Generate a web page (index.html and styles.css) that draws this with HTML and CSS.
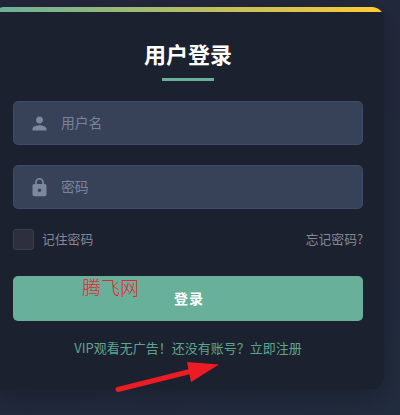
FILE: index.html
```html
<!DOCTYPE html>
<html lang="zh-CN">
<head>
  <meta charset="UTF-8">
  <meta name="viewport" content="width=device-width, initial-scale=1.0">
  <title>用户登录</title>
  <link rel="stylesheet" href="styles.css">
</head>
<body>

<main class="login-card">
  <h1 class="title">用户登录</h1>

  <form class="login-form">
    <label class="field">
      <svg class="icon" viewBox="0 0 24 24"><path d="M12 12c2.21 0 4-1.79 4-4s-1.79-4-4-4-4 1.79-4 4 1.79 4 4 4zm0 2c-2.67 0-8 1.34-8 4v2h16v-2c0-2.66-5.33-4-8-4z"/></svg>
      <input type="text" name="username" placeholder="用户名">
    </label>
    <label class="field">
      <svg class="icon" viewBox="0 0 24 24"><path d="M18 8h-1V6c0-2.76-2.24-5-5-5S7 3.24 7 6v2H6c-1.1 0-2 .9-2 2v10c0 1.1.9 2 2 2h12c1.1 0 2-.9 2-2V10c0-1.1-.9-2-2-2zm-6 9c-1.1 0-2-.9-2-2s.9-2 2-2 2 .9 2 2-.9 2-2 2zm3.1-9H8.9V6c0-1.71 1.39-3.1 3.1-3.1s3.1 1.39 3.1 3.1v2z"/></svg>
      <input type="password" name="password" placeholder="密码">
    </label>

    <div class="options">
      <label class="remember"><input type="checkbox" name="remember"><span>记住密码</span></label>
      <a href="#">忘记密码?</a>
    </div>

    <button type="submit" class="submit">登录</button>
  </form>

  <p class="register"><a href="#">VIP观看无广告！还没有账号？立即注册</a></p>

  <span class="watermark">腾飞网</span>
  <svg class="arrow" viewBox="0 0 110 40">
    <path class="shaft" d="M6 29.5L80 11"/>
    <path class="head" d="M75 2L107 4.5L79 22Z"/>
  </svg>
</main>

</body>
</html>
```
FILE: styles.css
```css
* {
  box-sizing: border-box;
}
body {
  margin: 0;
  height: 415px;
  padding-top: 7px;
  overflow: hidden;
  font-family: "Noto Sans CJK SC", sans-serif;
  background: linear-gradient(135deg, #24263b, #222d3f);
}
a {
  color: inherit;
  text-decoration: none;
}
.login-card {
  position: relative;
  width: 392px;
  height: 382px;
  margin-left: -8px;
  padding: 30px 21px 0;
  border-radius: 12px;
  background: #1c2130;
  box-shadow: 0 8px 28px rgba(0, 0, 0, 0.25);
}
/* gradient strip, clipped to the rounded corners of the card */
.login-card::before {
  content: "";
  position: absolute;
  inset: 0;
  border-radius: 12px;
  background: linear-gradient(90deg, #68b09a, #ffcc33) 0 0 / 100% 5px no-repeat;
}
.title {
  margin: 0;
  color: #fff;
  font-size: 22px;
  line-height: 33px;
  font-weight: 700;
  text-align: center;
}
.title::after {
  content: "";
  display: block;
  width: 52px;
  height: 3px;
  margin: 8px auto 0;
  background: #68b09a;
}
.login-form {
  position: relative;
  display: flex;
  flex-direction: column;
  margin-top: 20px;
}
.field {
  display: flex;
  align-items: center;
  height: 44px;
  margin-bottom: 20px;
  padding-left: 15px;
  border: 1px solid #3d4c68;
  border-radius: 5px;
  background: #374259;
}
.icon {
  width: 21px;
  height: 21px;
  margin-right: 11px;
  fill: #7f879e;
}
.field input {
  flex: 1;
  min-width: 0;
  padding: 0 0 2px;
  border: 0;
  outline: 0;
  background: transparent;
  color: #fff;
  font: 13.8px/20px "Noto Sans CJK SC", sans-serif;
}
.field input::placeholder {
  color: #7a839a;
}
.options {
  display: flex;
  justify-content: space-between;
  align-items: center;
  height: 21px;
  color: #858896;
  font-size: 12.8px;
}
.options a,
.options span {
  padding-bottom: 2px;
}
.remember {
  display: flex;
  align-items: center;
}
.remember input {
  appearance: none;
  width: 21px;
  height: 21px;
  margin: 0 8px 0 0;
  border: 1px solid #3c3f4d;
  border-radius: 3px;
  background: #2d2f3e;
}
.submit {
  height: 45px;
  margin-top: 26px;
  padding: 0 0 2px 2px;
  border: 0;
  border-radius: 5px;
  background: #68b09a;
  color: #fff;
  font: 700 14px/20px "Noto Sans CJK SC", sans-serif;
  letter-spacing: 1px;
}
.register {
  position: relative;
  margin: 17px 0 0;
  color: #5ca58e;
  font-size: 13px;
  line-height: 20px;
  text-align: center;
}
.watermark {
  position: absolute;
  left: 90px;
  top: 266px;
  color: #e5282e;
  font-size: 19px;
  line-height: 28px;
  font-weight: 300;
}
.arrow {
  position: absolute;
  left: 120px;
  top: 353px;
  width: 110px;
  height: 40px;
}
.arrow .shaft {
  fill: none;
  stroke: #ed1c24;
  stroke-width: 5;
  stroke-linecap: round;
}
.arrow .head {
  fill: #ed1c24;
}
```
